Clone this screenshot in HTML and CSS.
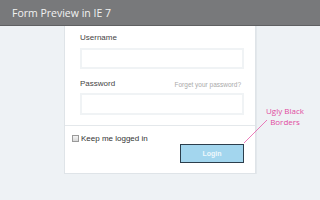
FILE: index.html
```html
<!DOCTYPE html>
<html>
<head>
    <title>Form Preview in IE 7</title>
    <meta charset="UTF-8">
    <link rel="stylesheet" href="styles.css">
</head>
<body>

<header class="topbar">
    <h1>Form Preview in IE 7</h1>
</header>

<main class="stage">
    <form class="login-card">
        <div class="fields">
            <label class="field-label" for="username">Username</label>
            <input class="text-input" type="text" id="username">

            <div class="label-row">
                <label class="field-label" for="password">Password</label>
                <a class="forgot" href="#">Forget your password?</a>
            </div>
            <input class="text-input pass" type="password" id="password">
        </div>

        <div class="actions">
            <label class="remember"><input type="checkbox" class="check">Keep me logged in</label>
            <button type="button" class="login-btn">Login</button>
        </div>
    </form>

    <svg class="note-line" width="320" height="174" viewBox="0 0 320 174">
        <line x1="267" y1="94" x2="244" y2="117" stroke="#e65aa8" stroke-width="0.8"/>
    </svg>
    <div class="note">Ugly Black<br>Borders</div>
</main>

</body>
</html>
```

FILE: styles.css
```css
body {
    margin: 0;
    background: #eef2f5;
    font-family: "Liberation Sans", Arial, sans-serif;
}

.topbar {
    height: 25px;
    background: #78797b;
    border-bottom: 1px solid #5f6062;
}

.topbar h1 {
    margin: 0;
    padding-left: 12px;
    font-family: "Open Sans", sans-serif;
    font-weight: normal;
    font-size: 10.5px;
    line-height: 26px;
    color: #f2f2f2;
}

.stage {
    position: relative;
    height: 174px;
}

.login-card {
    width: 192px;
    margin-left: 64px;
    box-sizing: border-box;
    background: #fff;
    border: 1px solid #dfe4e8;
    border-top: none;
    box-shadow: 1px 0 0 #e3e8ec;
}

.fields {
    padding: 6px 11px 10px 15px;
    border-bottom: 1px solid #e4e8eb;
}

.field-label {
    display: block;
    font-size: 8px;
    line-height: 12px;
    color: #444;
}

.text-input {
    display: block;
    width: 100%;
    height: 21px;
    margin-top: 4px;
    box-sizing: border-box;
    border: 2px solid #f0f3f5;
    background: #fff;
    outline: none;
}

.text-input.pass {
    height: 22px;
    margin-top: 3px;
}

.label-row {
    display: flex;
    justify-content: space-between;
    align-items: center;
    margin-top: 9px;
    padding-right: 3px;
}

.forgot {
    font-size: 6.5px;
    color: #aaa;
    text-decoration: none;
}

.actions {
    display: flex;
    flex-direction: column;
    padding: 8px 11px 10px 7px;
}

.remember {
    display: flex;
    align-items: center;
    gap: 2px;
    font-size: 8px;
    line-height: 9px;
    color: #333;
}

.check {
    appearance: none;
    width: 7px;
    height: 7px;
    margin: 0;
    border: 1px solid #9a9a9a;
    background: linear-gradient(#f4f4f4, #d8d8d8);
}

.login-btn {
    align-self: flex-end;
    width: 64px;
    height: 19px;
    margin-top: 1px;
    padding: 0;
    border: 1px solid #2c3e4c;
    background: #a3d6ee;
    color: #eef8fc;
    font-family: "Liberation Sans", Arial, sans-serif;
    font-weight: bold;
    font-size: 7px;
}

.note-line {
    position: absolute;
    left: 0;
    top: 0;
    pointer-events: none;
}

.note {
    position: absolute;
    left: 262px;
    top: 79px;
    width: 46px;
    text-align: center;
    font-family: "Open Sans", sans-serif;
    font-size: 8px;
    line-height: 11px;
    color: #e14a9f;
}
```
